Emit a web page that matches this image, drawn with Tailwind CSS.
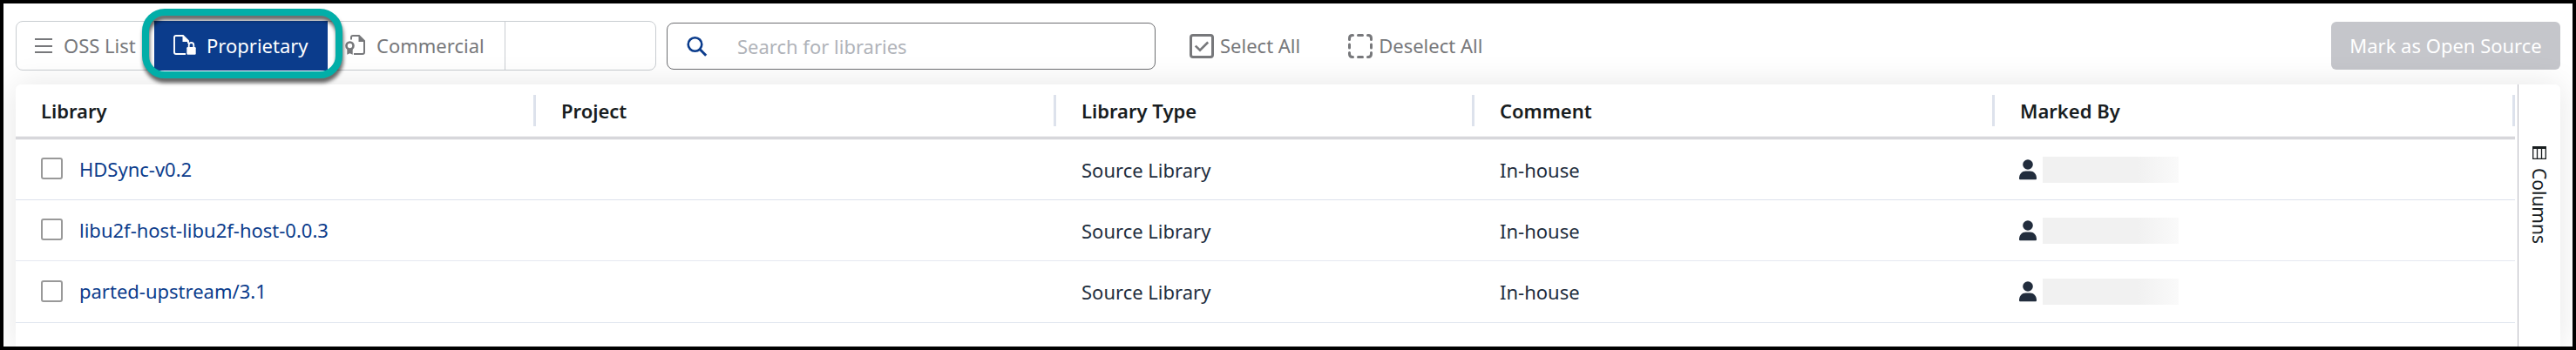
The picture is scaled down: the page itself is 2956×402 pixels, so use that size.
<!DOCTYPE html>
<html lang="en">
<head>
<meta charset="utf-8">
<title>Libraries</title>
<script src="https://cdn.jsdelivr.net/npm/@tailwindcss/browser@4"></script>
</head>
<body class="font-['Noto_Sans',sans-serif] text-[22px] leading-[30px]">
<svg class="hidden" aria-hidden="true">
  <symbol id="person" viewBox="0 0 20 24"><circle cx="10" cy="6" r="5.800" fill="currentColor"/><path d="M0 22C0 16.500 3.500 13.500 7.500 13.500H12.500C16.500 13.500 20 16.500 20 22Q20 23.200 19 23.200H1Q0 23.200 0 22Z" fill="currentColor"/></symbol>
</svg>
<div class="flex h-screen flex-col overflow-hidden border-4 border-black bg-white px-[14px] pt-5">
  <header class="mb-4 flex h-[57px] shrink-0 items-center text-[#77787b]">
    <nav class="flex h-[57px] w-[735px] shrink-0 rounded-lg border border-[#c9cdd1]" aria-label="Library kind">
      <button class="flex w-[158px] items-center gap-3 whitespace-nowrap pb-0.5 pl-5">
        <svg class="h-6 w-[22px] shrink-0" viewBox="0 0 22 24" fill="none" stroke="currentColor" stroke-width="2"><path d="M1 5h20M1 13h20M1 20h20"/></svg>
        OSS List
      </button>
      <button class="relative -my-px flex w-[199px] items-center gap-3 whitespace-nowrap bg-[#0b3c8c] pb-0.5 pl-[22px] text-white" aria-pressed="true">
        <svg class="h-6 w-[26px] shrink-0" viewBox="0 0 26 24" fill="none"><path d="M14 22H3Q1 22 1 20V3Q1 1 3 1H11L17 7V10" stroke="currentColor" stroke-width="1.900"/><path d="M10.500 0.500L17.800 8H10.500Z" fill="currentColor"/><path d="M17.700 15V11.800a2.800 2.800 0 0 1 5.600 0V15" stroke="currentColor" stroke-width="1.800"/><rect x="15.300" y="14" width="10.400" height="8.800" rx="1.200" fill="currentColor"/></svg>
        Proprietary
        <span class="pointer-events-none absolute -top-[14px] -right-[17px] -bottom-[9px] -left-[14px] z-10 rounded-[26px] border-8 border-[#02aea8] drop-shadow-[1px_5px_2px_rgba(0,0,0,0.6)]"></span>
      </button>
      <button class="flex w-[204px] items-center gap-3 whitespace-nowrap border-r border-[#c9cdd1] pb-0.5 pl-5">
        <svg class="h-6 w-6 shrink-0" viewBox="0 0 24 24" fill="none"><circle cx="5.500" cy="12.500" r="4" stroke="currentColor" stroke-width="2.600"/><path d="M2.300 16H8.700V22.800L5.500 21.200L2.300 22.800Z" fill="currentColor"/><path d="M7 5.500V3Q7 1 9 1H16L22 7V20Q22 22 20 22H10" stroke="currentColor" stroke-width="2"/><path d="M15.500 0.500L23 8H15.500Z" fill="currentColor"/></svg>
        Commercial
      </button>
    </nav>
    <label class="ml-3 flex h-[54px] w-[561px] items-center rounded-lg border border-[#6d6e71]">
      <svg class="ml-[22px] h-6 w-6" viewBox="0 0 24 24" fill="none" stroke="#0b3c8c"><circle cx="9.500" cy="10" r="7.800" stroke-width="2.600"/><path d="M15 15.500L22.200 22.700" stroke-width="3"/></svg>
      <input type="text" aria-label="Search for libraries" placeholder="Search for libraries" class="ml-[34px] flex-1 outline-none placeholder:text-[#b0b3b9]">
    </label>
    <button class="ml-[39px] flex items-center gap-[7px] whitespace-nowrap pb-0.5">
      <svg class="mt-0.5 size-7" viewBox="0 0 28 28" fill="none" stroke="currentColor"><rect x="1.500" y="1.500" width="25" height="25" rx="2.500" stroke-width="3"/><path d="M6.800 13.600L12 18.600L21.200 9.500" stroke-width="2.600"/></svg>
      Select All
    </button>
    <button class="ml-[55px] flex items-center gap-[7px] whitespace-nowrap pb-0.5">
      <svg class="mt-0.5 size-7" viewBox="0 0 28 28" fill="none" stroke="currentColor" stroke-width="3" stroke-linecap="round"><path d="M1.500 6.500V5Q1.500 1.500 5 1.500H5.500M11.500 1.500H16.500M22.500 1.500H23Q26.500 1.500 26.500 5V6.500M26.500 12V16M26.500 21.500V23Q26.500 26.500 23 26.500H22.500M16.500 26.500H11.500M5.500 26.500H5Q1.500 26.500 1.500 23V21.500M1.500 16V12"/></svg>
      Deselect All
    </button>
    <button class="ml-auto h-[55px] w-[263px] whitespace-nowrap rounded-md bg-[#c5c6cb] pb-0.5 text-white" disabled>Mark as Open Source</button>
  </header>

  <main class="flex flex-1 rounded-t-md bg-white shadow-[0_0_36px_rgba(0,0,0,0.1)]">
    <div class="flex-1 pr-[3px]">
      <table class="w-full table-fixed border-separate border-spacing-0 text-left text-[#222d3d]">
        <colgroup><col><col><col class="w-[480px]"><col><col></colgroup>
        <thead class="text-[#181d1f]">
          <tr>
            <th class="border-b-3 border-double border-[#b9b9c0] p-0 font-semibold"><div class="flex h-[60px] items-center justify-between pl-[29px]">Library<span class="h-9 w-[3px] bg-[#dde2ec]"></span></div></th>
            <th class="border-b-3 border-double border-[#b9b9c0] p-0 font-semibold"><div class="flex h-[60px] items-center justify-between pl-[29px]">Project<span class="h-9 w-[3px] bg-[#dde2ec]"></span></div></th>
            <th class="border-b-3 border-double border-[#b9b9c0] p-0 font-semibold"><div class="flex h-[60px] items-center justify-between pl-[29px]">Library Type<span class="h-9 w-[3px] bg-[#dde2ec]"></span></div></th>
            <th class="border-b-3 border-double border-[#b9b9c0] p-0 font-semibold"><div class="flex h-[60px] items-center justify-between pl-[29px]">Comment<span class="h-9 w-[3px] bg-[#dde2ec]"></span></div></th>
            <th class="border-b-3 border-double border-[#b9b9c0] p-0 font-semibold"><div class="flex h-[60px] items-center justify-between pl-[29px]">Marked By<span class="h-9 w-[3px] bg-[#dde2ec]"></span></div></th>
          </tr>
        </thead>
        <tbody>
          <tr class="h-[70px]">
            <td class="border-b border-[#dde1ec] py-0 pl-[29px]"><div class="flex items-center gap-[19px] pb-0.5"><input type="checkbox" aria-label="Select HDSync-v0.2" class="size-[25px] appearance-none rounded-[3px] border-2 border-[#999]"><a href="#" class="text-[#0b3c8c]">HDSync-v0.2</a></div></td>
            <td class="border-b border-[#dde1ec] p-0"></td>
            <td class="border-b border-[#dde1ec] py-0 pl-[29px]">Source Library</td>
            <td class="border-b border-[#dde1ec] py-0 pl-[29px]">In-house</td>
            <td class="border-b border-[#dde1ec] py-0 pl-[28px]"><div class="flex items-center gap-[7px]"><svg class="h-6 w-5" aria-hidden="true"><use href="#person"/></svg><span class="h-[30px] w-[156px] bg-linear-to-r from-[#f1f1f1] from-70% to-[#fafafa]"></span></div></td>
          </tr>
          <tr class="h-[70px]">
            <td class="border-b border-[#e6e8f1] py-0 pl-[29px]"><div class="flex items-center gap-[19px] pb-0.5"><input type="checkbox" aria-label="Select libu2f-host-libu2f-host-0.0.3" class="size-[25px] appearance-none rounded-[3px] border-2 border-[#999]"><a href="#" class="text-[#0b3c8c]">libu2f-host-libu2f-host-0.0.3</a></div></td>
            <td class="border-b border-[#e6e8f1] p-0"></td>
            <td class="border-b border-[#e6e8f1] py-0 pl-[29px]">Source Library</td>
            <td class="border-b border-[#e6e8f1] py-0 pl-[29px]">In-house</td>
            <td class="border-b border-[#e6e8f1] py-0 pl-[28px]"><div class="flex items-center gap-[7px]"><svg class="h-6 w-5" aria-hidden="true"><use href="#person"/></svg><span class="h-[30px] w-[156px] bg-linear-to-r from-[#f1f1f1] from-70% to-[#fafafa]"></span></div></td>
          </tr>
          <tr class="h-[71px]">
            <td class="border-b border-[#e2e7f0] py-0 pl-[29px]"><div class="flex items-center gap-[19px] pb-0.5"><input type="checkbox" aria-label="Select parted-upstream/3.1" class="size-[25px] appearance-none rounded-[3px] border-2 border-[#999]"><a href="#" class="text-[#0b3c8c]">parted-upstream/3.1</a></div></td>
            <td class="border-b border-[#e2e7f0] p-0"></td>
            <td class="border-b border-[#e2e7f0] py-0 pl-[29px]">Source Library</td>
            <td class="border-b border-[#e2e7f0] py-0 pl-[29px]">In-house</td>
            <td class="border-b border-[#e2e7f0] py-0 pl-[28px]"><div class="flex items-center gap-[7px]"><svg class="h-6 w-5" aria-hidden="true"><use href="#person"/></svg><span class="h-[30px] w-[156px] bg-linear-to-r from-[#f1f1f1] from-70% to-[#fafafa]"></span></div></td>
          </tr>
        </tbody>
      </table>
    </div>
    <aside class="flex w-[49px] shrink-0 items-start justify-center border-l border-[#b9b9c0] pt-[71px]">
      <button class="flex flex-col items-center gap-[10px] text-[21px] text-[#181d1f]">
        <svg class="h-[15px] w-4" viewBox="0 0 16 15" fill="none" stroke="currentColor"><path d="M0 1.500H16" stroke-width="3"/><path d="M0.700 2V14.300H15.300V2M5.500 2V14M10.500 2V14" stroke-width="1.300"/></svg>
        <span class="[writing-mode:vertical-rl]">Columns</span>
      </button>
    </aside>
  </main>
</div>
</body>
</html>
